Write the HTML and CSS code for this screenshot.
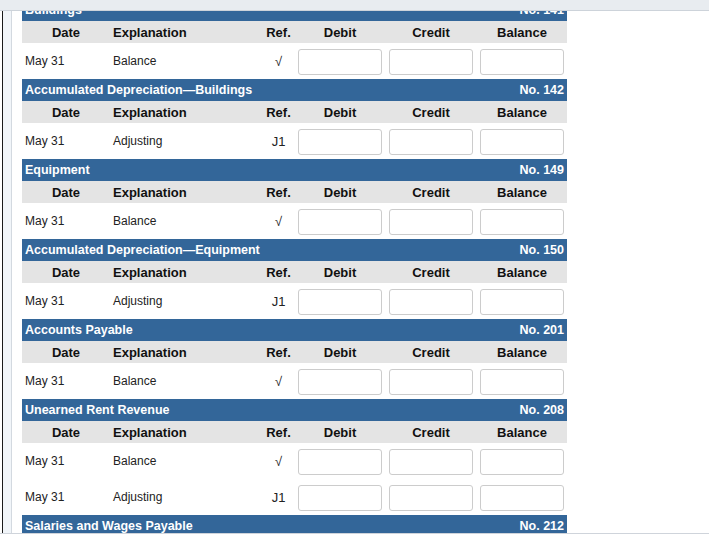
FILE: index.html
```html
<!DOCTYPE html>
<html>
<head>
<meta charset="utf-8">
<link rel="stylesheet" href="styles.css">
</head>
<body>
<div class="topbar"></div>
<div class="main">
  <div class="gutter"></div>
  <div class="content">
    <div class="ledgers">
      <div class="ledger">
        <div class="title"><span>Buildings</span><span>No. 141</span></div>
        <div class="row head"><div class="c-date">Date</div><div class="c-exp">Explanation</div><div class="c-ref">Ref.</div><div class="c-amt">Debit</div><div class="c-amt">Credit</div><div class="c-amt last">Balance</div></div>
        <div class="row data"><div class="c-date">May 31</div><div class="c-exp">Balance</div><div class="c-ref">√</div><div class="c-amt"><span class="box"></span></div><div class="c-amt"><span class="box"></span></div><div class="c-amt last"><span class="box"></span></div></div>
      </div>
      <div class="ledger">
        <div class="title"><span>Accumulated Depreciation—Buildings</span><span>No. 142</span></div>
        <div class="row head"><div class="c-date">Date</div><div class="c-exp">Explanation</div><div class="c-ref">Ref.</div><div class="c-amt">Debit</div><div class="c-amt">Credit</div><div class="c-amt last">Balance</div></div>
        <div class="row data"><div class="c-date">May 31</div><div class="c-exp">Adjusting</div><div class="c-ref">J1</div><div class="c-amt"><span class="box"></span></div><div class="c-amt"><span class="box"></span></div><div class="c-amt last"><span class="box"></span></div></div>
      </div>
      <div class="ledger">
        <div class="title"><span>Equipment</span><span>No. 149</span></div>
        <div class="row head"><div class="c-date">Date</div><div class="c-exp">Explanation</div><div class="c-ref">Ref.</div><div class="c-amt">Debit</div><div class="c-amt">Credit</div><div class="c-amt last">Balance</div></div>
        <div class="row data"><div class="c-date">May 31</div><div class="c-exp">Balance</div><div class="c-ref">√</div><div class="c-amt"><span class="box"></span></div><div class="c-amt"><span class="box"></span></div><div class="c-amt last"><span class="box"></span></div></div>
      </div>
      <div class="ledger">
        <div class="title"><span>Accumulated Depreciation—Equipment</span><span>No. 150</span></div>
        <div class="row head"><div class="c-date">Date</div><div class="c-exp">Explanation</div><div class="c-ref">Ref.</div><div class="c-amt">Debit</div><div class="c-amt">Credit</div><div class="c-amt last">Balance</div></div>
        <div class="row data"><div class="c-date">May 31</div><div class="c-exp">Adjusting</div><div class="c-ref">J1</div><div class="c-amt"><span class="box"></span></div><div class="c-amt"><span class="box"></span></div><div class="c-amt last"><span class="box"></span></div></div>
      </div>
      <div class="ledger">
        <div class="title"><span>Accounts Payable</span><span>No. 201</span></div>
        <div class="row head"><div class="c-date">Date</div><div class="c-exp">Explanation</div><div class="c-ref">Ref.</div><div class="c-amt">Debit</div><div class="c-amt">Credit</div><div class="c-amt last">Balance</div></div>
        <div class="row data"><div class="c-date">May 31</div><div class="c-exp">Balance</div><div class="c-ref">√</div><div class="c-amt"><span class="box"></span></div><div class="c-amt"><span class="box"></span></div><div class="c-amt last"><span class="box"></span></div></div>
      </div>
      <div class="ledger">
        <div class="title"><span>Unearned Rent Revenue</span><span>No. 208</span></div>
        <div class="row head"><div class="c-date">Date</div><div class="c-exp">Explanation</div><div class="c-ref">Ref.</div><div class="c-amt">Debit</div><div class="c-amt">Credit</div><div class="c-amt last">Balance</div></div>
        <div class="row data"><div class="c-date">May 31</div><div class="c-exp">Balance</div><div class="c-ref">√</div><div class="c-amt"><span class="box"></span></div><div class="c-amt"><span class="box"></span></div><div class="c-amt last"><span class="box"></span></div></div>
        <div class="row data"><div class="c-date">May 31</div><div class="c-exp">Adjusting</div><div class="c-ref">J1</div><div class="c-amt"><span class="box"></span></div><div class="c-amt"><span class="box"></span></div><div class="c-amt last"><span class="box"></span></div></div>
      </div>
      <div class="ledger">
        <div class="title"><span>Salaries and Wages Payable</span><span>No. 212</span></div>
        <div class="row head"><div class="c-date">Date</div><div class="c-exp">Explanation</div><div class="c-ref">Ref.</div><div class="c-amt">Debit</div><div class="c-amt">Credit</div><div class="c-amt last">Balance</div></div>
      </div>
    </div>
  </div>
</div>
<div class="footer">
  <p class="note">Click if you would like to Show Work for this question: <span class="link">Open Show Work</span></p>
</div>
</body>
</html>
```

FILE: styles.css
```css
html, body {
  margin: 0;
  padding: 0;
  background: #ffffff;
  font-family: "Liberation Sans", Arial, sans-serif;
}

.topbar {
  height: 10px;
  background: #e8ecf0;
  border-bottom: 1px solid #cdd3da;
}

.main {
  display: flex;
  height: 522px;
  border-bottom: 1px solid #cfd4db;
}

.gutter {
  margin-left: 2px;
  width: 8px;
  background: #f1f5f9;
  border-left: 1px solid #1a1a1a;
  border-right: 1px solid #d3d9e0;
}

.content {
  flex: 1;
  padding-left: 10px;
  overflow: hidden;
}

.ledgers {
  width: 545px;
  margin-top: -12px;
}

.title {
  height: 22px;
  background: #336699;
  color: #ffffff;
  font-weight: bold;
  font-size: 12.5px;
  display: flex;
  justify-content: space-between;
  align-items: center;
  padding: 0 3px;
}

.row {
  display: grid;
  grid-template-columns: 88px 152px 33px 91px 91px 90px;
  align-items: center;
}

.head {
  height: 22px;
  background: #e4e4e4;
  font-weight: bold;
  font-size: 13px;
  color: #111;
}

.head .c-date { text-align: center; }
.head .c-exp { padding-left: 3px; }
.head .c-ref { text-align: center; }
.head .c-amt { text-align: center; padding-left: 3px; padding-right: 4px; }
.head .c-amt.last { padding-right: 3px; }

.data {
  height: 36px;
  font-size: 12px;
  color: #222;
}

.data .c-date { padding-left: 3px; }
.data .c-exp { padding-left: 3px; }
.data .c-ref { text-align: center; font-size: 13px; }
.data .c-amt { padding-left: 3px; display: flex; align-items: center; padding-top: 2px; }

.box {
  display: block;
  width: 84px;
  height: 26px;
  box-sizing: border-box;
  border: 1px solid #cccccc;
  border-radius: 3px;
  background: #fff;
}

.footer {
  height: 13px;
  overflow: hidden;
}

.note {
  margin: 10px 0 0 12px;
  font-size: 13px;
  color: #333;
}

.link {
  color: #1a5fa8;
}
```
